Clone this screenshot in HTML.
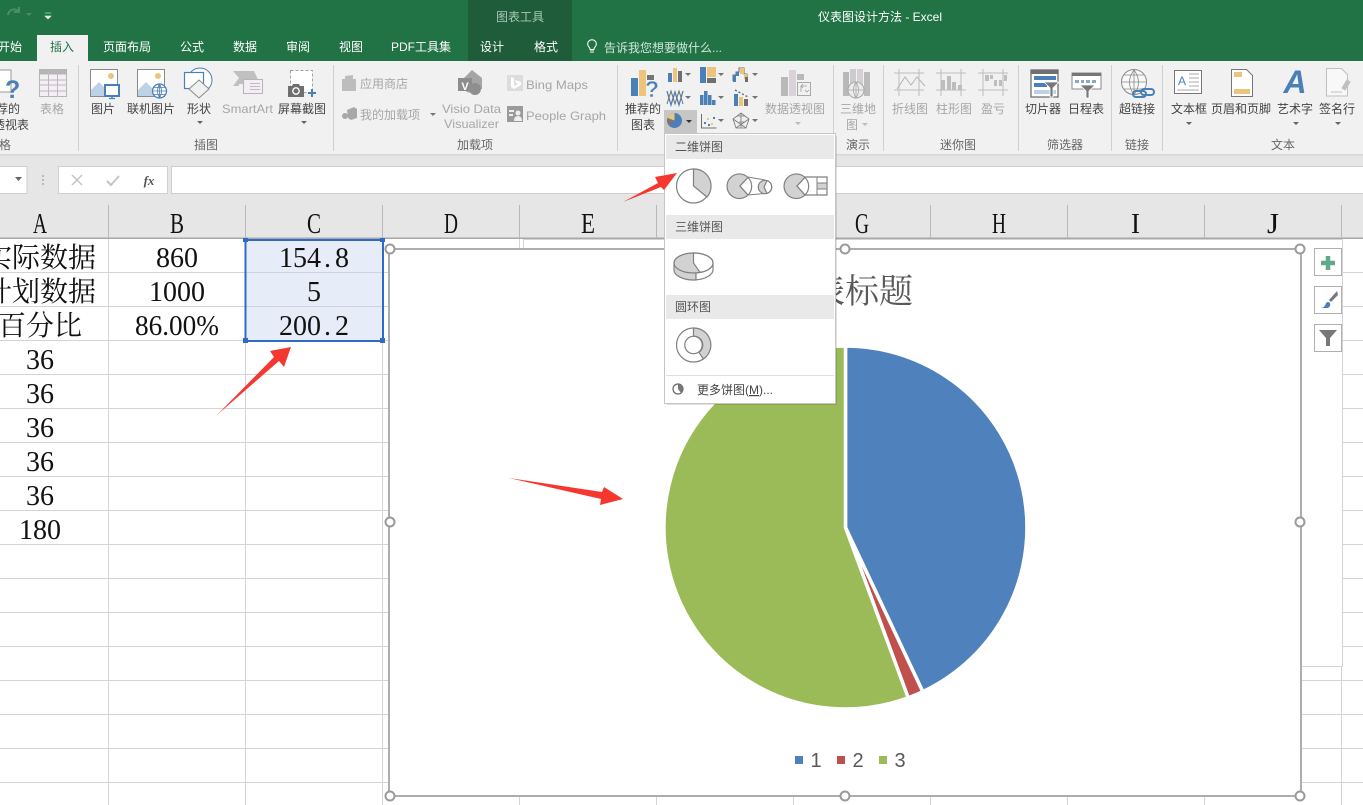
<!DOCTYPE html>
<html lang="zh"><head><meta charset="utf-8"><title>仪表图设计方法 - Excel</title>
<style>
html,body{margin:0;padding:0;background:#fff;overflow:hidden;width:1363px;height:805px}
svg{display:block;position:absolute;left:0;top:0}
text{font-family:"Liberation Sans","Noto Sans CJK SC",sans-serif;font-size:12px;fill:#444}
.m{text-anchor:middle}
.g{fill:#a6a6a6}
.l{fill:#666}
.t{fill:#fff}
.c{font-family:"Liberation Serif","Noto Serif CJK SC",serif;font-size:28px;fill:#111;text-anchor:middle}
.h{font-family:"Liberation Serif","Noto Serif CJK SC",serif;font-size:29px;fill:#111;text-anchor:middle}
.d{fill:#595959}
.sep{stroke:#d0d0d0;stroke-width:1}
.grid{stroke:#d4d4d4;stroke-width:1}
.hs{stroke:#b9b9b9;stroke-width:1}
.pie{stroke:#808080;stroke-width:1.2;fill:#fff}
.pf{stroke:#808080;stroke-width:1.2;fill:#d2d2d2}
.hd{fill:#fff;stroke:#9a9a9a;stroke-width:2}
</style></head><body>
<svg width="1363" height="805" viewBox="0 0 1363 805" xmlns="http://www.w3.org/2000/svg">
<rect width="1363" height="805" fill="#fff"/>
<!-- title bar -->
<rect width="1363" height="61" fill="#217346"/>
<rect x="468" width="104" height="61" fill="#1e5c3a"/>
<rect x="37" y="35" width="51" height="26" fill="#f1f1f1"/>
<path d="M8 15a6 6 0 0 1 10-4M19 7v5h-5" fill="none" stroke="#4b8d6b" stroke-width="2"/>
<path d="M26 13h6l-3 3z" fill="#4b8d6b"/>
<path d="M45 13h6M45 16h6l-3 3z" fill="#fff" stroke="#fff" stroke-width=".6"/>
<text x="520" y="21" class="m" style="fill:#a9c9b8">图表工具</text>
<text x="880" y="21" class="m t">仪表图设计方法 - Excel</text>
<text x="10" y="51" class="m t">开始</text>
<text x="62" y="51" class="m" style="fill:#217346">插入</text>
<text x="127" y="51" class="m t">页面布局</text>
<text x="192" y="51" class="m t">公式</text>
<text x="245" y="51" class="m t">数据</text>
<text x="298" y="51" class="m t">审阅</text>
<text x="351" y="51" class="m t">视图</text>
<text x="421" y="51" class="m t">PDF工具集</text>
<text x="492" y="51" class="m t">设计</text>
<text x="546" y="51" class="m t">格式</text>
<path d="M590 52h4M590 50h4M589.500 47.500a4.300 4.300 0 1 1 5 0q-.5 1-.5 2h-4q0-1-.5-2z" fill="none" stroke="#fff" stroke-width="1"/>
<text x="604" y="52" style="fill:#cfe6da">告诉我您想要做什么...</text>
<!-- ribbon -->
<rect y="61" width="1363" height="94" fill="#f1f1f1"/>
<rect y="155" width="1363" height="50" fill="#e6e6e6"/>
<rect y="154" width="1363" height="1.500" fill="#d6d6d6"/>
<path class="sep" d="M78.500 65v86M333.500 65v86M617.500 65v86M833.500 65v86M883.500 65v86M1018.500 65v86M1111.500 65v86M1162.500 65v86"/>
<!-- left pivot icon -->
<rect x="-4" y="70" width="15" height="22" fill="#fff" stroke="#999"/>
<text x="5" y="98" style="font-size:25px;font-weight:bold;fill:#4a7fb8">?</text>
<text x="8" y="113" class="m">荐的</text>
<text x="11" y="129" class="m">透视表</text>
<text x="5" y="149" class="m l">格</text>
<!-- table icon -->
<rect x="39.500" y="69.500" width="27" height="27" fill="#f4eff4" stroke="#b5b5b5"/>
<rect x="39.500" y="69.500" width="27" height="5" fill="#b5b5b5"/>
<path d="M39 80h28M39 85h28M39 91h28M48.500 70v27M57.500 70v27" stroke="#c0b5c0" fill="none"/>
<text x="52" y="113" class="m g">表格</text>
<!-- picture -->
<rect x="90.500" y="69.500" width="27" height="27" fill="#fff" stroke="#8a8a8a"/>
<circle cx="111" cy="76" r="3" fill="#ecc47c"/>
<path d="M91 96v-6l8-8 8 8v6z" fill="#bdd2e6"/>
<rect x="105" y="85" width="14" height="11" fill="#fff" stroke="#4a7fb8" stroke-width="2"/>
<path d="M109 98.500h6M112 96v2" stroke="#4a7fb8" stroke-width="1.300"/>
<text x="103" y="113" class="m">图片</text>
<!-- online picture -->
<rect x="137.500" y="69.500" width="27" height="27" fill="#fff" stroke="#8a8a8a"/>
<circle cx="158" cy="76" r="3" fill="#ecc47c"/>
<path d="M138 96v-6l8-8 8 8v6z" fill="#bdd2e6"/>
<circle cx="159.500" cy="91" r="7" fill="#fff" stroke="#4a7fb8" stroke-width="1.300"/>
<path d="M152.500 91h14M153.500 87.500h12M153.500 94.500h12M159.500 84v14M159.500 84q-4 7 0 14M159.500 84q4 7 0 14" stroke="#4a7fb8" fill="none" stroke-width=".8"/>
<text x="151" y="113" class="m">联机图片</text>
<!-- shapes -->
<circle cx="200" cy="80" r="12" fill="#fff" stroke="#4a7fb8" stroke-width="1"/>
<rect x="184.500" y="72.500" width="19" height="16" fill="#fff" stroke="#4a7fb8" stroke-width="1.200"/>
<path d="M199 80l10 9-10 9-10-9z" fill="#f1f1f1" stroke="#8a8a8a" stroke-width="1"/>
<text x="199" y="113" class="m">形状</text>
<path d="M197 121h6l-3 3z" fill="#666"/>
<!-- smartart -->
<path d="M233 71h21l6 13h-21v2h-6l6-8z" fill="#c0c0c0"/>
<rect x="243.500" y="79.500" width="19" height="14" fill="#f3eef3" stroke="#b5b5b5"/>
<path d="M250 83.500h10M250 86.500h10M250 89.500h10" stroke="#c4b9c4"/>
<text x="222" y="113" class="g" textLength="51" lengthAdjust="spacingAndGlyphs">SmartArt</text>
<!-- screenshot -->
<rect x="290.500" y="70.500" width="22" height="22" fill="#fff" stroke="#a0a0a0" stroke-dasharray="3 2"/>
<path d="M288 86h4l1-2h6l1 2h4v11h-16z" fill="#6f6f6f"/>
<circle cx="296" cy="91" r="3.200" fill="#6f6f6f" stroke="#fff" stroke-width="1.300"/>
<path d="M312 89v8M308 93h8" stroke="#4a7fb8" stroke-width="2"/>
<text x="302" y="113" class="m">屏幕截图</text>
<path d="M301 121h6l-3 3z" fill="#666"/>
<text x="206" y="149" class="m l">插图</text>
<!-- addins -->
<path d="M342 79h14v12h-14z M345 79v-3l8-1v4" fill="#bdbdbd"/>
<text x="360" y="88" class="g">应用商店</text>
<path d="M347 110l7-3 3 2v9l-6 2-3-2z" fill="#a8a8a8"/><circle cx="345" cy="116" r="3" fill="#a8a8a8"/>
<text x="360" y="119" class="g">我的加载项</text>
<path d="M430 113h6l-3 3z" fill="#777"/>
<path d="M472 70l10 8v11h-10l-3 4-7-4h-4V78h6z" fill="#a5a5a5"/>
<rect x="458" y="78" width="14" height="13" fill="#8d8d8d"/>
<circle cx="475" cy="89" r="6" fill="#8f8f8f"/>
<text x="465" y="90" class="m" style="font-size:11px;font-weight:bold;fill:#fff">V</text>
<text x="442" y="113" class="g" textLength="59" lengthAdjust="spacingAndGlyphs">Visio Data</text>
<text x="444" y="128" class="g" textLength="55" lengthAdjust="spacingAndGlyphs">Visualizer</text>
<rect x="507" y="75" width="16" height="16" fill="#dcdcdc"/>
<path d="M511 77l3 1v8l4-2-2-1-1-3 6 2v3l-7 4-3-2z" fill="#fff"/>
<text x="526" y="89" class="g" textLength="62" lengthAdjust="spacingAndGlyphs">Bing Maps</text>
<rect x="507" y="106" width="16" height="16" fill="#9a9a9a"/>
<rect x="509" y="110" width="5" height="2" fill="#eee"/><rect x="509" y="114" width="4" height="2" fill="#eee"/>
<circle cx="518" cy="113" r="2.500" fill="#eee"/><path d="M514 121q0-5 4-5t4 5z" fill="#eee"/>
<text x="526" y="120" class="g" textLength="80" lengthAdjust="spacingAndGlyphs">People Graph</text>
<text x="475" y="149" class="m l">加载项</text>
<!-- recommended -->
<rect x="631" y="78" width="7" height="18" fill="#4a7fb8"/>
<rect x="639" y="70" width="7" height="26" fill="#ecc47c"/>
<rect x="647" y="75" width="7" height="5" fill="#757575"/>
<text x="652" y="97" class="m" style="font-size:23px;font-weight:bold;fill:#4a7fb8;stroke:#f1f1f1;stroke-width:.5">?</text>
<text x="643" y="113" class="m">推荐的</text>
<text x="643" y="129" class="m">图表</text>
<!-- small chart icons -->
<rect x="664" y="110" width="33" height="24" fill="#c6c6c6"/>
<rect x="668" y="73" width="4" height="9" fill="#4a7fb8"/><rect x="673" y="68" width="4" height="14" fill="#ecc47c"/><rect x="678" y="71" width="4" height="11" fill="#6f6f6f"/>
<rect x="700" y="67" width="6" height="16" fill="#4a7fb8"/><rect x="707" y="67" width="9" height="10" fill="#ecc47c"/><rect x="707" y="78" width="9" height="5" fill="#6f6f6f"/>
<path d="M733 81v-6h3v-3h3v-4h5v6h3v8" fill="none" stroke="#6f6f6f" stroke-width="1"/>
<rect x="733" y="75" width="3" height="7" fill="#4a7fb8"/><rect x="736" y="72" width="3" height="4" fill="#4a7fb8"/><rect x="740" y="68" width="4" height="6" fill="#ecc47c"/><rect x="744" y="74" width="3" height="5" fill="#ecc47c"/><rect x="745" y="77" width="3" height="5" fill="#6f6f6f"/>
<path d="M667 91l4 14 4-13 4 13 4-14" fill="none" stroke="#4a7fb8" stroke-width="1.300"/>
<path d="M667 104l4-13 4 13 4-13 4 13" fill="none" stroke="#6f6f6f" stroke-width="1"/>
<rect x="700" y="95" width="3.500" height="10" fill="#4a7fb8"/><rect x="704" y="91" width="3.500" height="14" fill="#4a7fb8"/><rect x="708" y="95" width="3.500" height="10" fill="#4a7fb8"/><rect x="712" y="100" width="3.500" height="5" fill="#4a7fb8"/>
<rect x="734" y="94" width="4" height="12" fill="#4a7fb8"/><rect x="739" y="97" width="4" height="9" fill="#ecc47c"/><rect x="744" y="99" width="4" height="7" fill="#6f6f6f"/>
<path d="M735 90l13 7" stroke="#6f6f6f" stroke-width="1.500" stroke-dasharray="2 2"/>
<circle cx="674.500" cy="120.500" r="7.500" fill="#4a7fb8"/>
<path d="M674.500 120.500v-7.500a7.500 7.500 0 0 0-7 5z" fill="#ecc47c"/>
<path d="M674.500 120.500l-7-2a7.500 7.500 0 0 0 2 7.500z" fill="#777"/>
<path d="M701.500 114v14h15" fill="none" stroke="#6f6f6f" stroke-width="1"/>
<rect x="704" y="122" width="2" height="2" fill="#4a7fb8"/><rect x="707" y="118" width="2" height="2" fill="#ecc47c"/><rect x="711" y="123" width="2" height="2" fill="#ecc47c"/><rect x="713" y="117" width="2" height="2" fill="#4a7fb8"/><rect x="708" y="124" width="2" height="2" fill="#4a7fb8"/>
<path d="M741 113l8 6-3 9h-10l-3-9zM741 113v15M733 119l13 9M749 119l-13 9M737 116l8 0M739 122h5" fill="#eee" stroke="#777" stroke-width=".8"/>
<path d="M685 73h6l-3 3zM718 73h6l-3 3zM752 73h6l-3 3zM685 96h6l-3 3zM718 96h6l-3 3zM752 96h6l-3 3zM718 119h6l-3 3zM752 119h6l-3 3z" fill="#737373"/>
<path d="M686 120h6l-3 3z" fill="#333"/>
<!-- pivot chart -->
<rect x="781" y="77" width="7" height="19" fill="#b9b9b9"/><rect x="789" y="70" width="7" height="26" fill="#d9d2d9"/><rect x="797" y="74" width="7" height="6" fill="#b9b9b9"/>
<rect x="797.500" y="82.500" width="13" height="13" fill="#f1f1f1" stroke="#a8a8a8"/>
<path d="M801 92v-6h6M803 84l-2 2 2 2M805 90l2 2 2-2" fill="none" stroke="#a0a0a0" stroke-width=".8"/>
<text x="795" y="113" class="m g">数据透视图</text>
<path d="M795 122h6l-3 3z" fill="#bbb"/>
<!-- 3D map -->
<rect x="843" y="72" width="6" height="24" fill="#b9b9b9"/><rect x="850" y="69" width="6" height="27" fill="#ccc"/><rect x="857" y="69" width="6" height="27" fill="#d6d0d6"/><rect x="864" y="72" width="6" height="24" fill="#bbb"/>
<circle cx="856" cy="90" r="8" fill="#ececec" stroke="#a8a8a8"/>
<path d="M848 90h16M856 82v16M856 82q-5 8 0 16M856 82q5 8 0 16" fill="none" stroke="#a8a8a8" stroke-width=".8"/>
<text x="858" y="113" class="m g">三维地</text>
<text x="852" y="129" class="m g">图</text>
<path d="M862 123h6l-3 3z" fill="#bbb"/>
<text x="858" y="149" class="m l">演示</text>
<!-- sparklines -->
<path d="M894 73h30M894 90h30M899 69v27M919 69v27" stroke="#bdbdbd" fill="none"/>
<path d="M897 89l8-12 6 8 6-8 8 9" fill="none" stroke="#b5b5b5"/>
<path d="M936 73h30M936 90h30M941 69v27M961 69v27" stroke="#bdbdbd" fill="none"/>
<path d="M941 80h4v10h-4zM947 76h4v14h-4zM952 82h4v8h-4zM958 85h4v5h-4z" fill="#bdbdbd"/>
<path d="M978 73h30M978 90h30M983 69v27M1003 69v27" stroke="#bdbdbd" fill="none"/>
<path d="M985 75h4v6h-4zM990 75h3v4h-3zM994 80h3v6h-3zM999 80h3v6h-3zM1004 75h3v6h-3z" fill="#bdbdbd"/>
<text x="910" y="113" class="m g">折线图</text>
<text x="954" y="113" class="m g">柱形图</text>
<text x="993" y="113" class="m g">盈亏</text>
<text x="958" y="149" class="m l">迷你图</text>
<!-- slicer -->
<rect x="1031" y="70" width="27" height="27" fill="#fff" stroke="#6f6f6f" stroke-width="1.300"/>
<rect x="1031" y="70" width="27" height="4" fill="#6f6f6f"/>
<rect x="1034" y="76" width="22" height="4" fill="#4a7fb8"/><rect x="1034" y="83" width="13" height="4" fill="#4a7fb8"/><rect x="1034" y="90" width="22" height="4" fill="#bdd2e6"/>
<path d="M1044 82h15l-6 6v9h-3v-9z" fill="#777" stroke="#fff" stroke-width=".8"/>
<rect x="1072" y="73" width="29" height="16" fill="#fff" stroke="#8a8a8a"/><rect x="1072" y="73" width="29" height="3" fill="#777"/>
<path d="M1075 80h4v3h-4zM1081 80h3v3h-3zM1086 80h4v3h-4zM1092 80h4v3h-4z" fill="#8ba8c8"/>
<path d="M1080 85h15l-6 6v7h-3v-7z" fill="#777" stroke="#fff" stroke-width=".8"/>
<text x="1043" y="113" class="m">切片器</text>
<text x="1086" y="113" class="m">日程表</text>
<text x="1065" y="149" class="m l">筛选器</text>
<!-- hyperlink -->
<circle cx="1134" cy="82" r="12.500" fill="#f8f8f8" stroke="#8a8a8a"/>
<path d="M1122 82h25M1124 75h20M1124 89h20M1134 70v25M1134 70q-9 12 0 25M1134 70q9 12 0 25" fill="none" stroke="#8a8a8a" stroke-width=".8"/>
<rect x="1133" y="91" width="13" height="6" rx="3" fill="none" stroke="#4a7fb8" stroke-width="2"/>
<rect x="1141" y="89" width="13" height="6" rx="3" fill="none" stroke="#4a7fb8" stroke-width="2"/>
<text x="1137" y="113" class="m">超链接</text>
<text x="1137" y="149" class="m l">链接</text>
<!-- text group -->
<rect x="1174.500" y="70.500" width="27" height="23" fill="#fff" stroke="#777"/>
<text x="1182" y="85" class="m" style="font-size:12px;fill:#4a7fb8">A</text>
<path d="M1189 74h10M1189 78h10M1189 82h10M1189 86h10M1177 90h22" stroke="#aaa"/>
<path d="M1231.500 69.500h15l6 6v21h-21z" fill="#fff" stroke="#777"/>
<rect x="1234" y="72" width="8" height="5" fill="#ecc47c"/><rect x="1234" y="89" width="16" height="5" fill="#ecc47c"/>
<text x="1295" y="93" class="m" style="font-size:32px;font-style:italic;font-weight:bold;fill:#4a7fb8">A</text>
<path d="M1326.500 68.500h15l6 6v21.500h-21z" fill="#f8f8f8" stroke="#c0c0c0"/>
<path d="M1331 92h11M1342 88l5-8 3 2-5 8z" fill="#c0c0c0" stroke="#c0c0c0"/>
<text x="1189" y="113" class="m">文本框</text>
<text x="1241" y="113" class="m">页眉和页脚</text>
<text x="1295" y="113" class="m">艺术字</text>
<text x="1337" y="113" class="m">签名行</text>
<path d="M1186 122h6l-3 3zM1293 122h6l-3 3zM1335 122h6l-3 3z" fill="#666"/>
<text x="1283" y="149" class="m l">文本</text>
<!-- formula bar -->
<rect x="-2" y="166.500" width="29" height="27" fill="#fff" stroke="#cfcfcf"/>
<path d="M15 177h7l-3.500 4z" fill="#666"/>
<path d="M43 175v2M43 179v2M43 183v2" stroke="#aaa" stroke-width="1.500"/>
<rect x="58.500" y="166.500" width="109" height="27" fill="#fff" stroke="#cfcfcf"/>
<rect x="171.500" y="166.500" width="1195" height="27" fill="#fff" stroke="#cfcfcf"/>
<path d="M72 175l10 10M82 175l-10 10" stroke="#c4c4c4" stroke-width="1.500"/>
<path d="M107 181l4 4 8-9" fill="none" stroke="#c4c4c4" stroke-width="2"/>
<text x="149" y="185" class="m" style="font-family:'Liberation Serif',serif;font-style:italic;font-weight:bold;font-size:13px;fill:#555">fx</text>
<!-- column headers -->
<rect y="205" width="1363" height="33" fill="#e6e6e6"/>
<rect y="237.500" width="1363" height="1.500" fill="#a8a8a8"/>
<path class="hs" d="M108.500 205v33M245.500 205v33M382.500 205v33M519.500 205v33M656.500 205v33M793.500 205v33M930.500 205v33M1067.500 205v33M1204.500 205v33M1341.500 205v33"/>
<text x="33" y="233" style="text-anchor:start" class="h" textLength="14" lengthAdjust="spacingAndGlyphs">A</text>
<text x="170" y="233" style="text-anchor:start" class="h" textLength="14" lengthAdjust="spacingAndGlyphs">B</text>
<text x="307" y="233" style="text-anchor:start" class="h" textLength="14" lengthAdjust="spacingAndGlyphs">C</text>
<text x="444" y="233" style="text-anchor:start" class="h" textLength="14" lengthAdjust="spacingAndGlyphs">D</text>
<text x="581" y="233" style="text-anchor:start" class="h" textLength="14" lengthAdjust="spacingAndGlyphs">E</text>
<text x="718" y="233" style="text-anchor:start" class="h" textLength="14" lengthAdjust="spacingAndGlyphs">F</text>
<text x="855" y="233" style="text-anchor:start" class="h" textLength="14" lengthAdjust="spacingAndGlyphs">G</text>
<text x="992" y="233" style="text-anchor:start" class="h" textLength="14" lengthAdjust="spacingAndGlyphs">H</text>
<text x="1131" y="233" style="text-anchor:start" class="h" textLength="9" lengthAdjust="spacingAndGlyphs">I</text>
<text x="1267" y="233" style="text-anchor:start" class="h" textLength="12" lengthAdjust="spacingAndGlyphs">J</text>
<!-- grid -->
<path class="grid" d="M0 272.500h1363M0 306.500h1363M0 340.500h1363M0 374.500h1363M0 408.500h1363M0 442.500h1363M0 476.500h1363M0 510.500h1363M0 544.500h1363M0 578.500h1363M0 612.500h1363M0 646.500h1363M0 680.500h1363M0 714.500h1363M0 748.500h1363M0 782.500h1363"/>
<path class="grid" d="M108.500 239v566M245.500 239v566M382.500 239v566M519.500 239v566M656.500 239v566M793.500 239v566M930.500 239v566M1067.500 239v566M1204.500 239v566M1341.500 239v566"/>
<!-- chart behind -->
<rect x="523.500" y="239.500" width="819" height="427" fill="#fff" stroke="#d4d4d4"/>
<!-- selection -->
<rect x="246" y="240" width="137" height="101" fill="#e6edf8"/>
<path d="M246 272.500h137M246 306.500h137" stroke="#cdd3dd"/>
<rect x="245.500" y="240" width="137.500" height="101" fill="none" stroke="#2f6bc4" stroke-width="2"/>
<path d="M243 238h5v4h-5zM380 238h5v4h-5z" fill="#2f6bc4"/>
<rect x="243" y="338" width="5" height="5" fill="#2f6bc4"/><rect x="380" y="338" width="5" height="5" fill="#2f6bc4"/>
<!-- cells -->
<text x="40" y="267" class="c">实际数据</text><text x="40" y="301" class="c">计划数据</text><text x="40" y="335" class="c">百分比</text>
<text x="40" y="369" class="c">36</text><text x="40" y="403" class="c">36</text><text x="40" y="437" class="c">36</text><text x="40" y="471" class="c">36</text><text x="40" y="505" class="c">36</text><text x="40" y="539" class="c">180</text>
<text x="177" y="267" class="c">860</text><text x="177" y="301" class="c">1000</text>
<text x="135" y="335" class="c" style="text-anchor:start" textLength="84" lengthAdjust="spacingAndGlyphs">86.00%</text>
<text x="314" y="267" class="c"><tspan>154</tspan><tspan dx="3">.</tspan><tspan dx="4">8</tspan></text>
<text x="314" y="301" class="c">5</text>
<text x="314" y="335" class="c"><tspan>200</tspan><tspan dx="3">.</tspan><tspan dx="4">2</tspan></text>
<!-- main chart -->
<rect x="389" y="249" width="912" height="547" fill="#fff" stroke="#adadad" stroke-width="2"/>
<text x="845" y="303" class="m d" style="font-family:'Liberation Serif','Noto Serif CJK SC',serif;font-size:34px">图表标题</text>
<path d="M845.500 527.500V346A181.500 181.500 0 0 1 922.800 691.700Z" fill="#4f81bd" stroke="#fff" stroke-width="3.500"/>
<path d="M845.500 527.500L922.800 691.700A181.500 181.500 0 0 1 908.200 697.800Z" fill="#c0504d" stroke="#fff" stroke-width="3.500"/>
<path d="M845.500 527.500L908.200 697.800A181.500 181.500 0 1 1 845.500 346Z" fill="#9bbb59" stroke="#fff" stroke-width="3.500"/>
<rect x="795" y="756" width="8" height="8" fill="#4f81bd"/><rect x="837" y="756" width="8" height="8" fill="#c0504d"/><rect x="879" y="756" width="8" height="8" fill="#9bbb59"/>
<text x="816" y="767" class="m d" style="font-size:20px">1</text><text x="858" y="767" class="m d" style="font-size:20px">2</text><text x="900" y="767" class="m d" style="font-size:20px">3</text>
<circle class="hd" cx="390" cy="249" r="4.500"/><circle class="hd" cx="845" cy="249" r="4.500"/><circle class="hd" cx="1300" cy="249" r="4.500"/><circle class="hd" cx="390" cy="522" r="4.500"/><circle class="hd" cx="1300" cy="522" r="4.500"/><circle class="hd" cx="390" cy="796" r="4.500"/><circle class="hd" cx="845" cy="796" r="4.500"/><circle class="hd" cx="1300" cy="796" r="4.500"/>
<!-- side buttons -->
<rect x="1314.500" y="248.500" width="27" height="27" fill="#fff" stroke="#b0b0b0"/>
<path d="M1328 256v14M1321 263h14" stroke="#62a88a" stroke-width="4.500"/>
<rect x="1314.500" y="286.500" width="27" height="27" fill="#fff" stroke="#b0b0b0"/>
<path d="M1337 291l-8 9 2 2 7-7z" fill="#777"/>
<path d="M1320 308q5 0 6-5 2-2 4 0 1 3-2 5z" fill="#4a7fb8"/>
<rect x="1314.500" y="324.500" width="27" height="27" fill="#fff" stroke="#b0b0b0"/>
<path d="M1319 330h18l-7 8v8h-4v-8z" fill="#777"/>
<!-- dropdown -->
<rect x="667" y="136" width="170" height="269" fill="#000" opacity=".12"/>
<rect x="664.500" y="133.500" width="171" height="270" fill="#fff" stroke="#c6c6c6"/>
<rect x="666" y="135" width="168" height="24" fill="#e9e9e9"/>
<rect x="666" y="215" width="168" height="24" fill="#e9e9e9"/>
<rect x="666" y="295" width="168" height="24" fill="#e9e9e9"/>
<text x="675" y="151" style="fill:#555">二维饼图</text>
<text x="675" y="231" style="fill:#555">三维饼图</text>
<text x="675" y="311" style="fill:#555">圆环图</text>
<!-- 2D pie -->
<circle class="pie" cx="693.500" cy="186" r="17"/>
<path class="pf" d="M693.500 186V169A17 17 0 0 1 707 197Z"/>
<!-- pie of pie -->
<path d="M748 177L765 180M748 195L765 193.500" stroke="#808080" fill="none"/>
<path class="pf" d="M740 186l8-8.500A12.300 12.300 0 1 0 748 195Z"/>
<path class="pie" d="M740 186l8-8.500A12.300 12.300 0 0 1 748 195Z"/>
<circle class="pf" cx="765" cy="187" r="6.700"/>
<path class="pie" d="M767 180.600a6.700 6.700 0 0 1 0 12.800l-3-6.400z"/>
<!-- bar of pie -->
<path d="M804 177h23v18h-23" stroke="#808080" fill="#fff" stroke-width="1.200"/>
<rect x="817" y="183" width="10" height="6" fill="#d2d2d2" stroke="#808080"/>
<path d="M817 177v18" stroke="#808080"/>
<path class="pf" d="M797 186l8-8.500A12.300 12.300 0 1 0 805 195Z"/>
<path class="pie" d="M797 186l8-8.500A12.300 12.300 0 0 1 805 195Z"/>
<!-- 3D pie -->
<path class="pf" d="M674 263v7c0 5.500 9 10 19.500 10 1 0 1.500 0 2.500-.1v-7l-1-.9z"/>
<path class="pie" d="M696 272.900c9-.6 17-4.800 17-10v7c0 5-8 9.300-17 10z"/>
<ellipse class="pf" cx="693.500" cy="263" rx="19.500" ry="10"/>
<path class="pie" d="M693.500 253c11 0 19.500 4.500 19.500 10 0 4.500-6 8.300-13 9.400l-6.500-9.400z"/>
<!-- donut -->
<circle class="pie" cx="693.500" cy="345" r="17"/>
<path class="pf" d="M693.500 328A17 17 0 0 1 703.500 359L698.800 352.300A8.700 8.700 0 0 0 693.500 336.300Z"/>
<circle cx="693.500" cy="345" r="8.700" fill="#fff" stroke="#808080" stroke-width="1.200"/>
<path d="M666 375.500h168" stroke="#e0e0e0"/>
<circle cx="678" cy="389" r="5" fill="#fff" stroke="#666" stroke-width="1.200"/>
<path d="M678 389v-5a5 5 0 0 1 3 9z" fill="#777"/>
<text x="697" y="394" style="fill:#444">更多饼图(<tspan text-decoration="underline">M</tspan>)...</text>
<!-- arrows -->
<path d="M217 415L274 357 270 351 291 347 284 367 279 361Z" fill="#f4382f"/>
<path d="M509 478L602 492 604 487 623 499 600 505 601 499Z" fill="#f4382f"/>
<path d="M623 202L658 183 655 177 677 173 664 190 661 187Z" fill="#f4382f"/>
</svg>
</body></html>
